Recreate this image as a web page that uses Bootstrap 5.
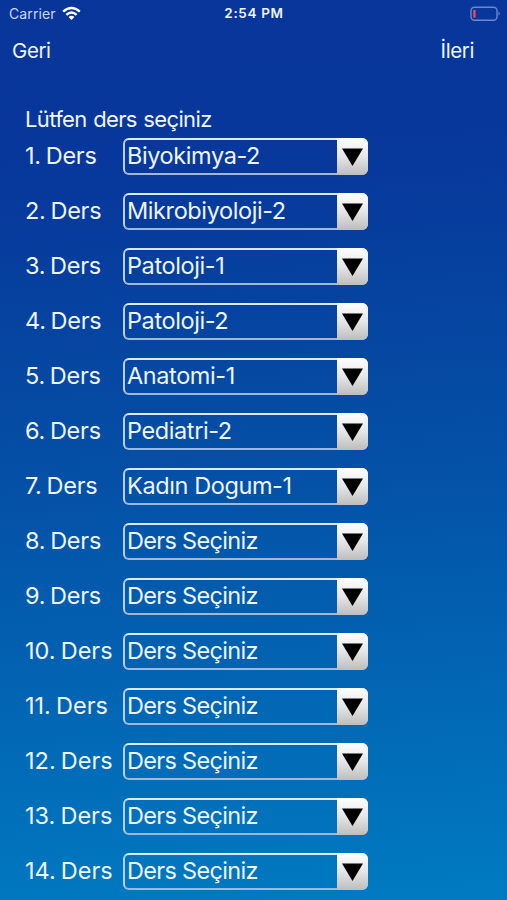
<!DOCTYPE html>
<html lang="tr">
<head>
<meta charset="utf-8">
<meta name="viewport" content="width=device-width, initial-scale=1">
<title>Ders Seçimi</title>
<link rel="stylesheet" href="https://cdn.jsdelivr.net/npm/bootstrap@5.3.0/dist/css/bootstrap.min.css">
<style>
body{font-family:Inter,"Liberation Sans",sans-serif;height:900px;overflow:hidden;color:#eef5ff;background:linear-gradient(176deg,#08359a 0%,#07389b 20%,#0450a6 52%,#007bc1 100%)}
.status{height:27px;font-size:14px;padding:0 6px 0 9px}
.carrier{color:#c9d6f3;letter-spacing:.1px;margin-right:6px}
.clock{font-size:13.5px;font-weight:600;letter-spacing:.65px;margin-right:2px}
.topbar{height:46px;font-size:20.5px;padding:2px 33px 0 12px;letter-spacing:-.4px}
.prompt{height:30px;font-size:22px;line-height:30px;letter-spacing:-.64px;word-spacing:1px;margin-top:31px}
.lessons{padding-left:25px;font-size:23.5px;line-height:36px}
.lesson{height:37px;margin-bottom:18px}
.num{width:98px;letter-spacing:-.25px;word-spacing:-1.5px}
.num.wide{letter-spacing:0}
.pick{width:245px;color:inherit;background:none;padding:0;border:2px solid;border-color:#dce8fb #b9cdec #a0b8d8;border-radius:6px}
.value{padding-left:2px;line-height:32px;letter-spacing:-.4px}
.value.unset{letter-spacing:-.68px}
.drop{width:31px;margin:-2px -2px -2px 0;background:linear-gradient(#fff,#e6e6e6 50%,#bdbdbd);border-radius:0 6px 6px 0}
</style>
</head>
<body>
<header>
<div class="status d-flex align-items-center">
<div class="col d-flex align-items-center"><span class="carrier">Carrier</span>
<svg width="19" height="15" viewBox="0 0 20 15" fill="none" stroke="#fff" stroke-width="2.5"><path d="M1.2 5.6Q10-2.4 18.8 5.6M4.6 8.9Q10 4.1 15.4 8.9"/><path d="M6.9 11.2Q10 8.5 13.1 11.2L10 14.4Z" fill="#fff" stroke="none"/></svg></div>
<div class="clock">2:54 PM</div>
<div class="col d-flex justify-content-end"><svg width="31" height="16" viewBox="0 0 31 16"><rect x="1" y="1.2" width="26" height="13" rx="3.5" fill="none" stroke="#6e87cc" stroke-width="1.4"/><rect x="3.2" y="3.7" width="2.4" height="8" rx="1" fill="#f04a50"/><path d="M28.5 5.3Q31 7.7 28.5 10.1Z" fill="#6e87cc"/></svg></div>
</div>
<nav class="topbar d-flex justify-content-between align-items-center"><span>Geri</span><span>İleri</span></nav>
</header>
<main class="lessons">
<div class="prompt">Lütfen ders seçiniz</div>
<div id="list" class="pt-1"></div>
</main>
<template id="row">
<div class="lesson d-flex">
<div class="num text-nowrap"></div>
<button type="button" class="pick d-flex text-start"><span class="value flex-fill text-nowrap"></span><span class="drop align-self-stretch d-flex align-items-center justify-content-center"><svg width="21" height="18" viewBox="0 0 21 18"><path d="M0 .5H21L10.5 18Z"/></svg></span></button>
</div>
</template>
<script src="https://cdn.jsdelivr.net/npm/bootstrap@5.3.0/dist/js/bootstrap.bundle.min.js"></script>
<script>
const chosen = ["Biyokimya-2","Mikrobiyoloji-2","Patoloji-1","Patoloji-2","Anatomi-1","Pediatri-2","Kadın Dogum-1"];
const list = document.getElementById("list");
for (let i = 0; i < 14; i++) {
  const row = document.getElementById("row").content.cloneNode(true);
  const num = row.querySelector(".num");
  num.textContent = (i + 1) + ". Ders";
  num.classList.toggle("wide", i > 8);
  const value = row.querySelector(".value");
  value.textContent = chosen[i] || "Ders Seçiniz";
  value.classList.toggle("unset", !chosen[i]);
  list.append(row);
}
</script>
</body>
</html>
